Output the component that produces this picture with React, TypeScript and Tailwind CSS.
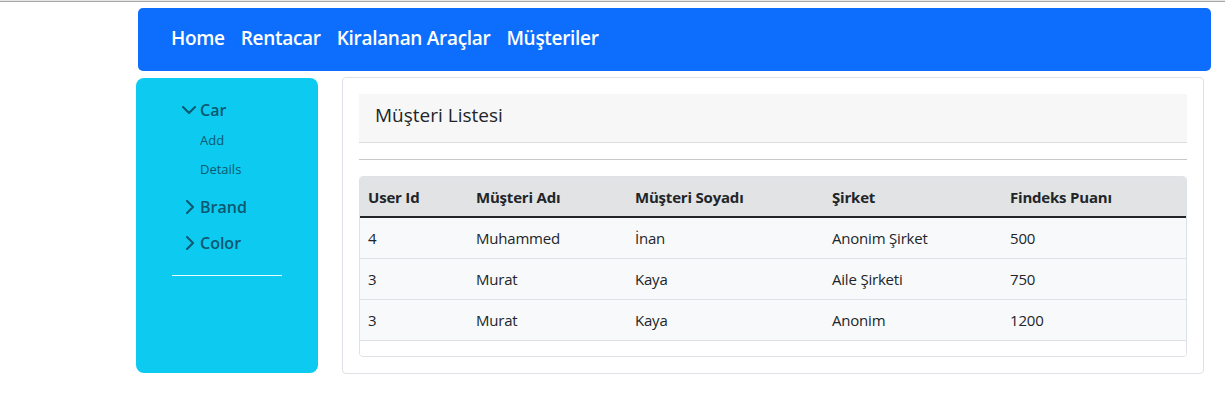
import React from "react";

const font = { fontFamily: '"Open Sans", "Noto Sans", Arial, sans-serif' };

const rows = [
  ["4", "Muhammed", "İnan", "Anonim Şirket", "500"],
  ["3", "Murat", "Kaya", "Aile Şirketi", "750"],
  ["3", "Murat", "Kaya", "Anonim", "1200"],
];

const colW = ["w-[108px]", "w-[159px]", "w-[197px]", "w-[178px]", "w-[184px]"];

function ChevDown() {
  return (
    <svg width="14" height="8" viewBox="0 0 14 8" className="mr-[4px]" fill="none">
      <polyline points="1,1 7,7 13,1" stroke="currentColor" strokeWidth="2" strokeLinecap="round" strokeLinejoin="round" />
    </svg>
  );
}

function ChevRight() {
  return (
    <svg width="8" height="14" viewBox="0 0 8 14" className="mr-[6px]" fill="none">
      <polyline points="1,1 7,7 1,13" stroke="currentColor" strokeWidth="2" strokeLinecap="round" strokeLinejoin="round" />
    </svg>
  );
}

export default function App() {
  return (
    <div className="w-[1225px] h-[409px] bg-white overflow-hidden text-[#212529]" style={font}>
      <div className="h-[1px] bg-[#e5e5e5]" />
      <div className="h-[1px] bg-[#a8a8a8]" />
      <nav className="ml-[138px] mt-[6px] w-[1073px] h-[63px] rounded-[5px] bg-[#0d6efd] flex items-center pl-[33px] gap-[16px] pb-[3px]">
        {["Home", "Rentacar", "Kiralanan Araçlar", "Müşteriler"].map((t) => (
          <span key={t} className="text-white text-[19px] font-semibold tracking-[-0.3px]">
            {t}
          </span>
        ))}
      </nav>
      <div className="flex mt-[6px]">
        <aside className="ml-[136px] mt-[1px] w-[182px] h-[295px] rounded-[8px] bg-[#0dcaf0] pt-[20px] text-[#0b5870]">
          <div className="flex items-center h-[24px] pl-[46px]">
            <ChevDown />
            <span className="text-[16px] font-semibold">Car</span>
          </div>
          <div className="mt-[8px] h-[22px] pl-[64px] text-[13px] flex items-center">Add</div>
          <div className="mt-[7px] h-[22px] pl-[64px] text-[13px] flex items-center">Details</div>
          <div className="mt-[14px] flex items-center h-[24px] pl-[50px]">
            <ChevRight />
            <span className="text-[16px] font-semibold">Brand</span>
          </div>
          <div className="mt-[12px] flex items-center h-[24px] pl-[50px]">
            <ChevRight />
            <span className="text-[16px] font-semibold">Color</span>
          </div>
          <div className="mt-[20px] ml-[36px] w-[110px] h-[1px] bg-white/90" />
        </aside>
        <main className="ml-[24px] w-[862px] h-[297px] border border-[#dee2e6] rounded-[4px] p-[16px]">
          <div className="h-[49px] bg-[#f7f7f7] border-b border-[#dcdcdc] flex items-center pl-[16px] pb-[5px]">
            <span className="text-[19px] text-[#212529]">Müşteri Listesi</span>
          </div>
          <div className="mt-[16px] h-[1px] bg-[#c8c8c8]" />
          <div className="mt-[16px] h-[181px] border border-[#dee2e6] rounded-[4px] overflow-hidden bg-[#f8f9fa]">
            <div className="flex h-[41px] bg-[#e2e3e5] border-b-2 border-[#212529] items-center pt-[1px]">
              {["User Id", "Müşteri Adı", "Müşteri Soyadı", "Şirket", "Findeks Puanı"].map((h, i) => (
                <div key={h} className={`${colW[i]} pl-[8px] text-[15px] font-bold tracking-[-0.2px]`}>
                  {h}
                </div>
              ))}
            </div>
            {rows.map((r, ri) => (
              <div key={ri} className="flex h-[41px] items-center border-b border-[#dee2e6] bg-[#f8f9fa]">
                {r.map((c, i) => (
                  <div key={i} className={`${colW[i]} pl-[8px] text-[15px] tracking-[-0.2px]`}>
                    {c}
                  </div>
                ))}
              </div>
            ))}
            <div className="h-[15px] bg-white" />
          </div>
        </main>
      </div>
    </div>
  );
}
